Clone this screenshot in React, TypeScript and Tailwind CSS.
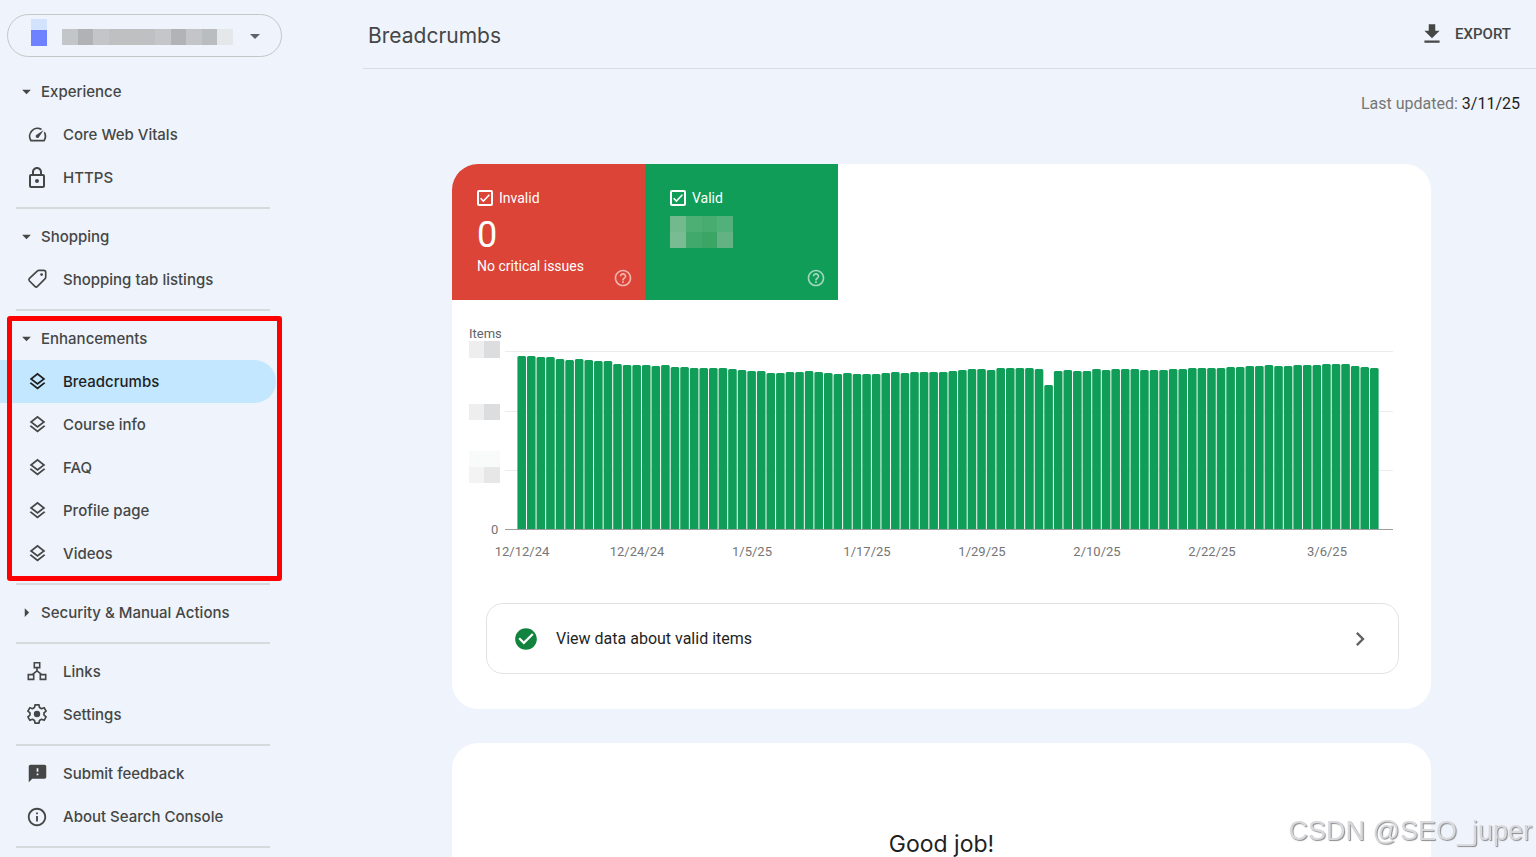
import { useState } from 'react';
import type { ReactNode } from 'react';
import {
    MdArrowDropDown,
    MdArrowRight,
    MdCheckCircle,
    MdChevronRight,
    MdFeedback,
    MdFileDownload,
    MdHelpOutline,
    MdOutlineInfo,
    MdOutlineLayers,
    MdOutlineLock,
    MdSpeed
} from 'react-icons/md';

// Bar heights in chart units, one per day starting 12/12/24
const dailyItems = [
    174, 174, 173, 173, 171, 170, 171, 170, 169, 169, 166, 165, 165, 165, 164,
    165, 163, 163, 162, 162, 162, 162, 161, 160, 159, 159, 157, 157, 158, 158,
    159, 158, 157, 156, 157, 156, 156, 156, 157, 158, 157, 158, 158, 158, 158,
    159, 160, 161, 161, 160, 162, 162, 162, 162, 161, 145, 159, 160, 159, 159,
    161, 160, 161, 161, 161, 160, 160, 160, 161, 161, 162, 162, 162, 162, 163,
    163, 164, 164, 165, 164, 164, 165, 165, 165, 166, 166, 166, 164, 163, 162
];

const dateLabels = ['12/12/24', '12/24/24', '1/5/25', '1/17/25', '1/29/25', '2/10/25', '2/22/25', '3/6/25'];

const siteNameCells = [
    'bg-[#c3c6c9]', 'bg-[#b0b2b6]', 'bg-[#c4c5c8]', 'bg-[#bec0c2]', 'bg-[#bec0c2]', 'bg-[#bec0c2]',
    'bg-[#c5c6c9]', 'bg-[#b1b3b6]', 'bg-[#c3c5c8]', 'bg-[#babdc0]', 'bg-[#e4e8eb]'
];

function TagIcon() {
    return (
        <svg viewBox="0 0 24 24" className="size-[22px]" fill="none" stroke="currentColor" strokeWidth="1.8" strokeLinejoin="round">
            <path d="M14 1.500h5.400c1.200 0 2.100.9 2.100 2.100V9c0 .6-.2 1.100-.6 1.500l-8.400 8.500c-.8.8-2 .8-2.800 0l-5.900-5.900c-.8-.8-.8-2 0-2.800l8.700-8.200c.4-.4.9-.6 1.500-.6z" />
            <circle cx="17" cy="6" r="1.500" fill="currentColor" stroke="none" />
        </svg>
    );
}

function LinksIcon() {
    return (
        <svg viewBox="0 0 22 22" className="size-[22px]" fill="none" stroke="currentColor" strokeWidth="1.6">
            <path d="M8.300 1.800h5.400v4.800H8.300zM2.300 13.600h5.400v4.800H2.300zM14.300 13.600h5.400v4.800h-5.400zM11 6.600v3.400M11 9.800l-4.800 3.800M11 9.800l4.800 3.800" />
        </svg>
    );
}

function GearIcon() {
    return (
        <svg viewBox="0 1 24 24" className="size-6" fill="none" stroke="currentColor" strokeWidth="1.7" strokeLinejoin="round">
            <path d="M10 2.800h4l.5 2.800 2 1.100 2.600-1 2 3.500-2.100 1.700v2.200l2.100 1.700-2 3.500-2.600-1-2 1.100-.5 2.800h-4l-.5-2.800-2-1.100-2.600 1-2-3.500L5 13.100v-2.200L2.900 9.200l2-3.500 2.600 1 2-1.100z" />
            <circle cx="12" cy="12" r="3.200" fill="currentColor" stroke="none" />
        </svg>
    );
}

function NavItem({ icon, label, active = false }: { icon: ReactNode; label: string; active?: boolean }) {
    return (
        <a
            href="#"
            className={
                active
                    ? 'flex h-[43px] w-[276px] items-center rounded-r-full bg-[#c2e7ff] pl-[25px] text-[#1f1f1f]'
                    : 'flex h-[43px] w-[276px] items-center pl-[25px] text-[#444746]'
            }
        >
            <span className="flex w-6 justify-center">{icon}</span>
            <span className="ml-3.5 pt-px">{label}</span>
        </a>
    );
}

function GroupTitle({ label, open = true }: { label: string; open?: boolean }) {
    return (
        <button type="button" className="flex h-[43px] items-center pl-4 text-[#444746]" aria-expanded={open}>
            {open ? <MdArrowDropDown className="size-[21px]" /> : <MdArrowRight className="size-[21px]" />}
            <span className="ml-1 pt-px">{label}</span>
        </button>
    );
}

function Divider() {
    return <hr className="mt-2 mb-1.5 ml-4 w-[254px] border-t-2 border-[#d7dadc]" />;
}

function Sidebar() {
    const layers = <MdOutlineLayers className="size-[21px]" />;

    return (
        <nav className="w-[347px] shrink-0 pt-3.5 text-[15px] font-medium">
            <button type="button" aria-label="Select property" className="ml-[7px] flex h-[43px] w-[275px] items-center rounded-full border border-[#c4c7c5] pl-[23px]">
                <span className="mb-1.5 flex h-[27px] w-4 flex-col">
                    <span className="h-[11px] bg-[#d3e3fd]" />
                    <span className="h-4 bg-[#6e82ff]" />
                </span>
                <span className="mt-0.5 ml-[15px] flex h-4 w-[171px]">
                    {siteNameCells.map((cell, i) => (
                        <span key={i} className={`flex-1 ${cell}`} />
                    ))}
                </span>
                <MdArrowDropDown className="ml-2.5 size-6 text-[#5f6368]" />
            </button>

            <div className="mt-[13px]">
                <GroupTitle label="Experience" />
                <NavItem icon={<MdSpeed className="size-[21px]" />} label="Core Web Vitals" />
                <NavItem icon={<MdOutlineLock className="size-6" />} label="HTTPS" />
            </div>
            <Divider />
            <div>
                <GroupTitle label="Shopping" />
                <NavItem icon={<TagIcon />} label="Shopping tab listings" />
            </div>
            <Divider />
            <div className="relative">
                <GroupTitle label="Enhancements" />
                <NavItem icon={layers} label="Breadcrumbs" active />
                <NavItem icon={layers} label="Course info" />
                <NavItem icon={layers} label="FAQ" />
                <NavItem icon={layers} label="Profile page" />
                <NavItem icon={layers} label="Videos" />
                <div className="pointer-events-none absolute -top-px left-[7px] h-[265px] w-[275px] rounded-[3px] border-[5px] border-[#ff0000]" />
            </div>
            <Divider />
            <GroupTitle label="Security & Manual Actions" open={false} />
            <Divider />
            <div>
                <NavItem icon={<LinksIcon />} label="Links" />
                <NavItem icon={<GearIcon />} label="Settings" />
            </div>
            <Divider />
            <div>
                <NavItem icon={<MdFeedback className="size-[21px]" />} label="Submit feedback" />
                <NavItem icon={<MdOutlineInfo className="size-[22px]" />} label="About Search Console" />
            </div>
            <Divider />
        </nav>
    );
}

interface StatusTileProps {
    label: string;
    color: string;
    checked: boolean;
    onToggle: () => void;
    children: ReactNode;
}

function StatusTile({ label, color, checked, onToggle, children }: StatusTileProps) {
    return (
        <div className={`relative h-[136px] w-[193px] pt-6 pl-[25px] text-white ${color}`}>
            <label className="flex h-5 items-center text-sm">
                <span className="relative flex size-4">
                    <input
                        type="checkbox"
                        checked={checked}
                        onChange={onToggle}
                        className="peer size-4 appearance-none rounded-[2px] border-2 border-white"
                    />
                    <svg viewBox="0 0 16 16" className="pointer-events-none absolute inset-0 hidden size-4 peer-checked:block" fill="none" stroke="currentColor" strokeWidth="1.6">
                        <path d="M3.600 8.200l2.800 2.800 6-6.200" />
                    </svg>
                </span>
                <span className="ml-1.5">{label}</span>
            </label>
            {children}
            <button type="button" aria-label={`About ${label}`} className="absolute right-3 bottom-3 text-white/60">
                <MdHelpOutline className="size-5" />
            </button>
        </div>
    );
}

function ItemsChart() {
    return (
        <svg viewBox="0 0 924 236" className="mt-[25px] ml-[17px] block w-[924px] max-w-full" role="img" aria-label="Items per day">
            <g fontFamily="Roboto, sans-serif" fontSize="13" fill="#757575">
                <text x="0" y="13" fill="#5f6368">Items</text>
                <text x="22" y="209">0</text>
                {dateLabels.map((date, i) => (
                    <text key={date} x={53 + i * 115} y="231" textAnchor="middle">{date}</text>
                ))}
            </g>
            {/* hidden axis values */}
            <g>
                <rect x="0" y="16" width="15" height="17" fill="#eeeeee" />
                <rect x="15" y="16" width="16" height="17" fill="#dcdddf" />
                <rect x="0" y="79" width="15" height="16" fill="#eeeeef" />
                <rect x="15" y="79" width="16" height="16" fill="#dcdddf" />
                <rect x="0" y="126" width="31" height="16" fill="#f9fafa" />
                <rect x="0" y="142" width="15" height="16" fill="#f3f3f4" />
                <rect x="15" y="142" width="16" height="16" fill="#e7e7e8" />
            </g>
            {[26, 86, 145].map((y) => (
                <rect key={y} x="36" y={y} width="888" height="1" fill="#ececec" />
            ))}
            {dailyItems.map((height, i) => (
                <path
                    key={i}
                    d={`M${48.4 + i * 9.58} 205v-${height - 1.5}q0-1.5 1.5-1.5h5.6q1.5 0 1.5 1.5v${height - 1.5}z`}
                    fill="#0f9d58"
                />
            ))}
            <rect x="36" y="204" width="888" height="1" fill="#9e9e9e" />
        </svg>
    );
}

export default function App() {
    const [showInvalid, setShowInvalid] = useState(true);
    const [showValid, setShowValid] = useState(true);

    return (
        <div className="flex h-screen overflow-hidden bg-[#eff3fb] font-['Inter',sans-serif]">
            <Sidebar />

            <main className="min-w-0 flex-1">
                <header className="ml-4 flex h-[69px] items-center justify-between border-b border-[#dadddf] pr-[25px] pl-[5px]">
                    <h1 className="pt-1 text-[21px] text-[#444746]">Breadcrumbs</h1>
                    <button type="button" className="flex items-center gap-2.5 font-['Roboto',sans-serif] text-[15px] font-medium text-[#444746]">
                        <MdFileDownload className="size-[26px]" />
                        EXPORT
                    </button>
                </header>

                <p className="mt-[25px] pr-4 text-right font-['Roboto',sans-serif] text-base leading-5 text-[#757775]">
                    Last updated: <span className="text-[#1f1f1f]">3/11/25</span>
                </p>

                <section className="mx-auto mt-[50px] max-w-[979px] overflow-hidden rounded-[26px] bg-white pb-[35px] font-['Roboto',sans-serif]">
                    <div className="flex">
                        <StatusTile label="Invalid" color="bg-[#db4437]" checked={showInvalid} onToggle={() => setShowInvalid(!showInvalid)}>
                            <p className="mt-2 text-4xl leading-[38px]">0</p>
                            <p className="mt-0.5 text-sm">No critical issues</p>
                        </StatusTile>
                        <StatusTile label="Valid" color="bg-[#0f9d58]" checked={showValid} onToggle={() => setShowValid(!showValid)}>
                            <div className="mt-2 grid h-8 w-[63px] grid-cols-4">
                                <span className="bg-[#72b98e]" />
                                <span className="bg-[#4daf74]" />
                                <span className="bg-[#48ac71]" />
                                <span className="bg-[#52b17a]" />
                                <span className="bg-[#79bb92]" />
                                <span className="bg-[#41a96b]" />
                                <span className="bg-[#3ba565]" />
                                <span className="bg-[#64b283]" />
                            </div>
                        </StatusTile>
                    </div>

                    <ItemsChart />

                    <a href="#" className="mr-8 ml-[34px] mt-[42px] flex h-[71px] items-center rounded-[17px] border border-[#e0e2e3] pr-6 pl-[26px] text-[#1f1f1f]">
                        <MdCheckCircle className="size-[26px] text-[#12833e]" />
                        <span className="ml-[17px] flex-1">View data about valid items</span>
                        <MdChevronRight className="size-7 text-[#5f6368]" />
                    </a>
                </section>

                <section className="mx-auto mt-[34px] h-60 max-w-[979px] rounded-[26px] bg-white pt-[85px] text-center">
                    <h2 className="text-[23px] leading-8 text-[#1f1f1f]">Good job!</h2>
                </section>
            </main>

            <div className="pointer-events-none fixed right-1 bottom-2 font-['Liberation_Sans',sans-serif] text-[27px] leading-9 text-[#d8d9dc] [text-shadow:1px_1px_1px_#8c8c8c]">
                CSDN @SEO_juper
            </div>
        </div>
    );
}
